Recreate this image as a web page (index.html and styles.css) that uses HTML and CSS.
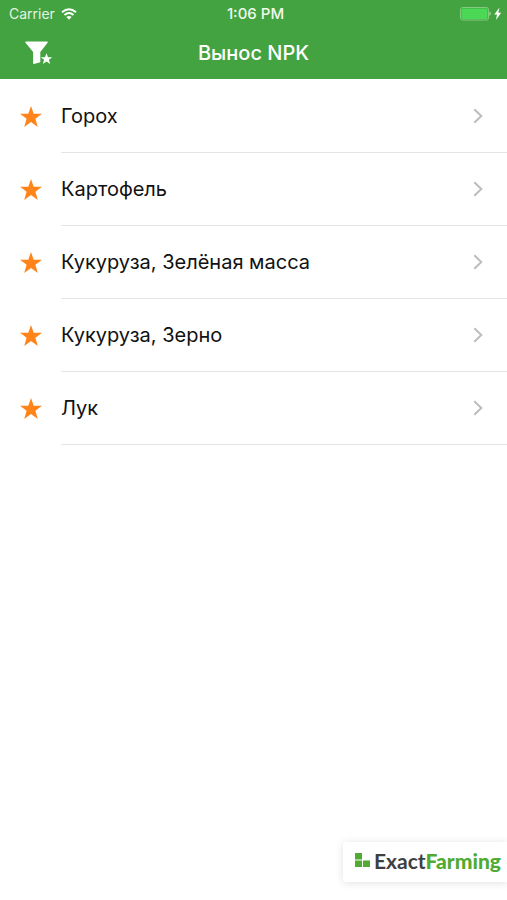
FILE: index.html
```html
<!DOCTYPE html>
<html lang="ru">
<head>
<meta charset="utf-8">
<meta name="viewport" content="width=device-width, initial-scale=1">
<title>Вынос NPK</title>
<link rel="stylesheet" href="styles.css">
</head>
<body>
<svg class="defs" aria-hidden="true">
  <symbol id="star" viewBox="0 0 22 21"><path d="M11 0l2.700 7.800H22l-6.600 5 2.400 8.200L11 16.100 4.200 21l2.400-8.200L0 7.800h8.300z"/></symbol>
  <symbol id="chevron" viewBox="0 0 10 16"><path d="M1.300 1.200L8.300 8l-7 6.800"/></symbol>
</svg>
<header class="header">
  <div class="status">
    <span class="carrier">Carrier
      <svg class="wifi" viewBox="0 0 16 12" aria-hidden="true"><path d="M1 4.200Q8-1.800 15 4.200M3.500 6.900Q8 3 12.500 6.900"/><path class="dot" d="M5.400 9Q8 6.800 10.600 9L8 11.700z"/></svg>
    </span>
    <span class="time">1:06 PM</span>
    <span class="power">
      <svg class="battery" viewBox="0 0 42 14" aria-hidden="true"><rect class="shell" x=".5" y=".5" width="28" height="12.500" rx="2"/><rect class="charge" x="1.500" y="1.500" width="26" height="10.500" rx="1"/><path class="tip" d="M29.500 4.500q2.500 2.200 0 4.500z"/><path class="bolt" d="M39.500 0.500L34.300 7.500h2.700L36 13l5.200-7.200h-2.900z"/></svg>
    </span>
  </div>
  <div class="navbar">
    <button class="filter" type="button" aria-label="Фильтр">
      <svg viewBox="0 0 28 24" aria-hidden="true"><path d="M1 .5h21q1.200 0 .6 1.200L15.300 11V20.500q0 .8-.8 1.100l-5.500 1.400q-.9 0-.9-.9V11L.5 1.700Q-.2.5 1 .5z"/><path d="M21.500 12.200l1.500 4h4.300l-3.400 2.600 1.300 4.200-3.700-2.500-3.700 2.500 1.300-4.200-3.400-2.600H20z"/></svg>
    </button>
    <h1 class="title">Вынос NPK</h1>
  </div>
</header>
<main class="content">
  <ul class="crops">
    <li><a class="crop" href="#"><svg class="star" aria-hidden="true"><use href="#star"/></svg><span class="label">Горох<svg class="chevron" aria-hidden="true"><use href="#chevron"/></svg></span></a></li>
    <li><a class="crop" href="#"><svg class="star" aria-hidden="true"><use href="#star"/></svg><span class="label">Картофель<svg class="chevron" aria-hidden="true"><use href="#chevron"/></svg></span></a></li>
    <li><a class="crop" href="#"><svg class="star" aria-hidden="true"><use href="#star"/></svg><span class="label">Кукуруза, Зелёная масса<svg class="chevron" aria-hidden="true"><use href="#chevron"/></svg></span></a></li>
    <li><a class="crop" href="#"><svg class="star" aria-hidden="true"><use href="#star"/></svg><span class="label">Кукуруза, Зерно<svg class="chevron" aria-hidden="true"><use href="#chevron"/></svg></span></a></li>
    <li><a class="crop" href="#"><svg class="star" aria-hidden="true"><use href="#star"/></svg><span class="label">Лук<svg class="chevron" aria-hidden="true"><use href="#chevron"/></svg></span></a></li>
  </ul>
</main>
<footer class="footer">
  <a class="brand" href="#">
    <svg class="logo" viewBox="0 0 16 15" aria-hidden="true"><path d="M0 0h7v6.500H0zM0 7.500h7V14H0zM8 7.500h7V14H8z"/></svg>
    <span>Exact<b>Farming</b></span>
  </a>
</footer>
</body>
</html>
```

FILE: styles.css
```css
* {
  box-sizing: border-box;
}

body {
  margin: 0;
  min-height: 100vh;
  display: flex;
  flex-direction: column;
  background: #fff;
  color: #111;
  font-family: Inter, "Liberation Sans", sans-serif;
}

a {
  color: inherit;
  text-decoration: none;
}

svg {
  display: block;
  flex: none;
}

.defs {
  position: absolute;
  width: 0;
  height: 0;
}

.header {
  background: #43a340;
  color: #fff;
}

.status {
  display: grid;
  grid-template-columns: 1fr auto 1fr;
  align-items: center;
  height: 27px;
  padding: 0 5px 0 9px;
  font-size: 14px;
}

.carrier {
  display: flex;
  align-items: center;
  gap: 6px;
  color: #e4f3e3;
}

.wifi {
  width: 16px;
  height: 12px;
  fill: none;
  stroke: #fff;
  stroke-width: 2;
}

.wifi .dot {
  fill: #fff;
  stroke: none;
}

.time {
  font-size: 15px;
  font-weight: 500;
  color: #effaee;
}

.power {
  justify-self: end;
}

.battery {
  width: 42px;
  height: 14px;
}

.shell {
  fill: none;
  stroke: #83ca80;
}

.charge {
  fill: #4bd855;
}

.tip {
  fill: #b9e2b7;
}

.bolt {
  fill: #fff;
}

.navbar {
  display: grid;
  grid-template-columns: 1fr auto 1fr;
  align-items: center;
  height: 52px;
  padding: 0 25px;
}

.filter {
  justify-self: start;
  padding: 0;
  border: 0;
  background: none;
}

.filter svg {
  width: 28px;
  height: 24px;
  fill: #fff;
}

.title {
  margin: 0;
  font-size: 20px;
  font-weight: 500;
}

.content {
  flex: 1;
}

.crops {
  margin: 0;
  padding: 1px 0 0;
  list-style: none;
}

.crop {
  display: flex;
  align-items: center;
  gap: 19px;
  padding-left: 20px;
}

.star {
  width: 22px;
  height: 21px;
  fill: #ff851b;
}

.label {
  flex: 1;
  display: flex;
  align-items: center;
  justify-content: space-between;
  height: 73px;
  padding-right: 24px;
  border-bottom: 1px solid #e4e4e4;
  font-size: 20px;
}

.chevron {
  width: 10px;
  height: 16px;
  fill: none;
  stroke: #bdbdbd;
  stroke-width: 2;
}

.footer {
  display: flex;
  justify-content: flex-end;
  padding-bottom: 18px;
}

.brand {
  display: flex;
  align-items: center;
  gap: 3px;
  height: 40px;
  padding: 0 6px 3px 12px;
  border-radius: 3px 0 0 3px;
  background: #fff;
  box-shadow: 0 1px 8px rgba(0, 0, 0, 0.12);
  color: #3d3f42;
  font-family: Lato, sans-serif;
  font-size: 21px;
  font-weight: 700;
}

.brand b {
  color: #51ab32;
  font-weight: 900;
}

.logo {
  width: 16px;
  height: 15px;
  fill: #51ab32;
}
```
